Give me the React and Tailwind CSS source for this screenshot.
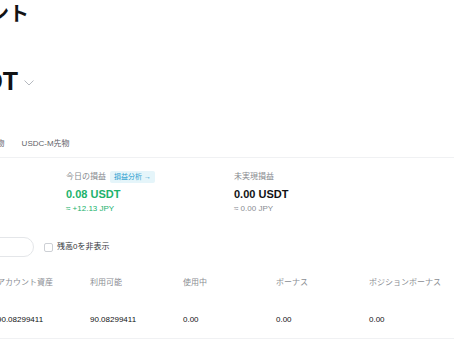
import React from "react";

const stats = [
    { label: "総資産", value: "90.08 USDT", sub: "≈ 13,610.42 JPY", tone: "dark" },
    { label: "今日の損益", value: "0.08 USDT", sub: "≈ +12.13 JPY", tone: "green", badge: true },
    { label: "未実現損益", value: "0.00 USDT", sub: "≈ 0.00 JPY", tone: "dark" },
];

const columns = ["通貨", "アカウント資産", "利用可能", "使用中", "ボーナス", "ポジションボーナス"];
const row = ["USDT", "90.08299411", "90.08299411", "0.00", "0.00", "0.00"];

export default function App() {
    return (
        <div className="w-[454px] h-[341px] overflow-hidden bg-white text-[#121214] font-['Liberation_Sans','Noto_Sans_CJK_JP',sans-serif]">
            <div className="-ml-[102px] w-[700px]">
                {/* title */}
                <h1 className="mt-[3px] ml-[31px] h-[22px] leading-[22px] text-[20px] font-semibold">アカウント</h1>

                {/* balance */}
                <div className="mt-[44px] ml-[52px] flex items-center h-[25px]">
                    <span className="text-[25px] leading-[25px] font-bold">USDT</span>
                    <svg width="10" height="6" viewBox="0 0 10 6" className="ml-[6px] mt-[3px]" fill="none">
                        <path d="M0.5 0.5L5 5L9.5 0.5" stroke="#b5b9bf" strokeWidth="1" />
                    </svg>
                </div>

                {/* tabs */}
                <div className="mt-[43px] h-[21px] border-b border-[#f0f1f3] flex gap-[17px] pl-[51px] text-[8px] leading-[13px] text-[#5f6368]">
                    <span>インバース先物</span>
                    <span>USDC-M先物</span>
                </div>

                {/* stats */}
                <div className="mt-[13px] flex">
                    {stats.map((s) => (
                        <div key={s.label} className="w-[168px]">
                            <div className="h-[12px] flex items-center gap-[4px]">
                                <span className="text-[8px] leading-[12px] text-[#85888e]">{s.label}</span>
                                {s.badge && (
                                    <span className="h-[12px] px-[4px] flex items-center rounded-[2px] bg-[#e5f5fa] text-[#2a9dcf] text-[7px] leading-[12px]">
                                        損益分析 →
                                    </span>
                                )}
                            </div>
                            <div className={`mt-[6px] text-[11px] leading-[11px] font-bold ${s.tone === "green" ? "text-[#20b26c]" : "text-[#121214]"}`}>
                                {s.value}
                            </div>
                            <div className={`mt-[4px] text-[8px] leading-[10px] ${s.tone === "green" ? "text-[#20b26c]" : "text-[#8a8d93]"}`}>
                                {s.sub}
                            </div>
                        </div>
                    ))}
                </div>

                {/* search + filter */}
                <div className="mt-[23px] h-[20px] flex items-center">
                    <div className="w-[136px] h-[20px] rounded-full border border-[#e4e6e9]" />
                    <span className="ml-[10px] w-[9px] h-[9px] rounded-[2px] border border-[#cdd0d5]" />
                    <span className="ml-[4px] text-[8px] leading-[12px] text-[#33363b]">残高0を非表示</span>
                </div>

                {/* table */}
                <div className="ml-[6px] mt-[20px] flex text-[8px] leading-[12px] text-[#8a8d93]">
                    {columns.map((c) => (
                        <div key={c} className="w-[93px]">{c}</div>
                    ))}
                </div>
                <div className="ml-[6px] mt-[25px] pb-[12px] border-b border-[#f0f1f3] flex text-[8px] leading-[12px] text-[#121214]">
                    {row.map((v, i) => (
                        <div key={i} className="w-[93px]">{v}</div>
                    ))}
                </div>
            </div>
        </div>
    );
}
